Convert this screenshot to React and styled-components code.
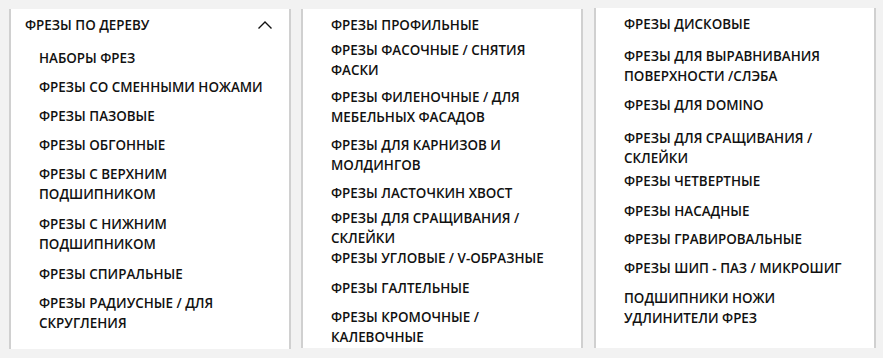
import React from 'react'
import styled, { createGlobalStyle } from 'styled-components'

const GlobalStyle = createGlobalStyle`
  html, body {
    margin: 0;
    padding: 0;
    background: #f2f2f2;
  }
  body {
    font-family: 'Open Sans', 'Noto Sans', sans-serif;
    color: #111;
  }
`

const Menu = styled.div`
  display: flex;
  gap: 10px;
  padding: 9px 0 0 9px;
  height: 358px;
  box-sizing: border-box;
`

const Panel = styled.div`
  width: 282px;
  height: ${props => props.$h}px;
  margin-top: ${props => props.$top || 0}px;
  margin-left: ${props => props.$shift || 0}px;
  box-sizing: border-box;
  background: #fff;
  border-left: 2px solid #d0d0d0;
  border-right: 2px solid #d0d0d0;
  padding: 6px 0 0 28px;
`

const Header = styled.div`
  display: flex;
  align-items: center;
  justify-content: space-between;
  margin-left: -14px;
  padding-right: 16px;
  height: 20px;
  font-size: 13.4px;
  font-weight: 600;
  line-height: 20px;
  text-transform: uppercase;
`

const List = styled.ul`
  list-style: none;
  margin: 0;
  padding: 0;
`

const Item = styled.li`
  margin-top: ${props => props.$gap}px;
  font-size: 13.4px;
  font-weight: 600;
  line-height: 20px;
  text-transform: uppercase;
  white-space: nowrap;
`

const Chevron = () => (
  <svg width="16" height="10" viewBox="0 0 16 10" fill="none">
    <path d="M1.5 8.5 L8 2 L14.5 8.5" stroke="#111" strokeWidth="1.4" />
  </svg>
)

const first = [
  { gap: 13, lines: ['Наборы фрез'] },
  { gap: 9, lines: ['Фрезы со сменными ножами'] },
  { gap: 9, lines: ['Фрезы пазовые'] },
  { gap: 9, lines: ['Фрезы обгонные'] },
  { gap: 9, lines: ['Фрезы с верхним', 'подшипником'] },
  { gap: 10, lines: ['Фрезы с нижним', 'подшипником'] },
  { gap: 10, lines: ['Фрезы спиральные'] },
  { gap: 9, lines: ['Фрезы радиусные / для', 'скругления'] },
]

const second = [
  { gap: 0, lines: ['Фрезы профильные'] },
  { gap: 5, lines: ['Фрезы фасочные / снятия', 'фаски'] },
  { gap: 7, lines: ['Фрезы филеночные / для', 'мебельных фасадов'] },
  { gap: 8, lines: ['Фрезы для карнизов и', 'молдингов'] },
  { gap: 8, lines: ['Фрезы ласточкин хвост'] },
  { gap: 5, lines: ['Фрезы для сращивания /', 'склейки'] },
  { gap: 0, lines: ['Фрезы угловые / V-образные'] },
  { gap: 10, lines: ['Фрезы галтельные'] },
  { gap: 9, lines: ['Фрезы кромочные /', 'калевочные'] },
]

const third = [
  { gap: 0, lines: ['Фрезы дисковые'] },
  { gap: 12, lines: ['Фрезы для выравнивания', 'поверхности /слэба'] },
  { gap: 9, lines: ['Фрезы для Domino'] },
  { gap: 13, lines: ['Фрезы для сращивания /', 'склейки'] },
  { gap: 3, lines: ['Фрезы четвертные'] },
  { gap: 10, lines: ['Фрезы насадные'] },
  { gap: 8, lines: ['Фрезы гравировальные'] },
  { gap: 9, lines: ['Фрезы шип - паз / микрошиг'] },
  { gap: 10, lines: ['Подшипники ножи', 'удлинители фрез'] },
]

const Items = ({ data }) => (
  <List>
    {data.map((it, i) => (
      <Item key={i} $gap={it.gap}>
        {it.lines.map((l, j) => (
          <React.Fragment key={j}>
            {j > 0 && <br />}
            {l}
          </React.Fragment>
        ))}
      </Item>
    ))}
  </List>
)

const App = () => {
  return (
    <>
      <GlobalStyle />
      <Menu>
        <Panel $h={340}>
          <Header>
            Фрезы по дереву
            <Chevron />
          </Header>
          <Items data={first} />
        </Panel>
        <Panel $h={339}>
          <Items data={second} />
        </Panel>
        <Panel $h={340} $top={-1} $shift={1}>
          <Items data={third} />
        </Panel>
      </Menu>
    </>
  )
}

export default App
